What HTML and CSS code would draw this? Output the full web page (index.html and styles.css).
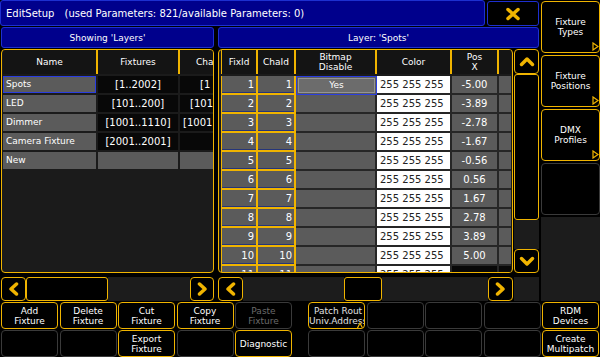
FILE: index.html
```html
<!DOCTYPE html>
<html>
<head>
  <title>EditSetup</title>
  <link rel="stylesheet" href="styles.css">
</head>
<body>
  <div class="screen">
    <div class="top">
      <div class="main">
        <div class="title-row">
          <div class="title-bar">
            <span>EditSetup</span>
            <span class="title-info">(used Parameters: 821/available Parameters: 0)</span>
          </div>
          <div class="close-button">
            <svg width="16" height="14" viewBox="0 0 16 14"><path d="M3 2.5 L13 11.5 M13 2.5 L3 11.5" stroke="#f0b400" stroke-width="3.5" stroke-linecap="round" fill="none"/></svg>
          </div>
        </div>

        <div class="header-row">
          <div class="panel-title left">Showing 'Layers'</div>
          <div class="panel-title right">Layer: 'Spots'</div>
        </div>

        <div class="content">
          <!-- Layers -->
          <div class="left-panel">
            <div class="table layers">
              <div class="lhead">
                <div>Name</div>
                <div>Fixtures</div>
                <div class="ch-head">Cha</div>
              </div>
              <div class="lrows">
                <div class="lcell name selected">Spots</div>
                <div class="lcell range">[1..2002]</div>
                <div class="lcell range ch ch-a">[1</div>

                <div class="lcell name">LED</div>
                <div class="lcell range">[101..200]</div>
                <div class="lcell range ch ch-b">[101</div>

                <div class="lcell name">Dimmer</div>
                <div class="lcell range">[1001..1110]</div>
                <div class="lcell range ch ch-c">[1001</div>

                <div class="lcell name">Camera Fixture</div>
                <div class="lcell range">[2001..2001]</div>
                <div class="lcell range"></div>

                <div class="lcell name">New</div>
                <div class="lcell grey"></div>
                <div class="lcell grey"></div>
              </div>
            </div>
            <div class="hscroll">
              <div class="arrow-btn">
                <svg width="11" height="14" viewBox="0 0 11 14"><path d="M8.5 2 L3 7 L8.5 12" stroke="#f0b400" stroke-width="3.5" stroke-linecap="round" stroke-linejoin="round" fill="none"/></svg>
              </div>
              <div class="thumb left-thumb"></div>
              <div class="track"></div>
              <div class="arrow-btn narrow">
                <svg width="11" height="14" viewBox="0 0 11 14"><path d="M2.5 2 L8 7 L2.5 12" stroke="#f0b400" stroke-width="3.5" stroke-linecap="round" stroke-linejoin="round" fill="none"/></svg>
              </div>
            </div>
          </div>

          <!-- Fixtures of the layer -->
          <div class="right-panel">
            <div class="table-area">
              <div class="table fixtures">
                <div class="fhead">
                  <div class="first">FixId</div>
                  <div>ChaId</div>
                  <div>Bitmap<br>Disable</div>
                  <div>Color</div>
                  <div>Pos<br>X</div>
                  <div class="last"></div>
                </div>

                <div class="frow">
                  <div class="fcell fix num">1</div><div class="fcell cha num">1</div>
                  <div class="fcell bitmap focused"><span class="yes">Yes</span></div>
                  <div class="fcell color num">255 255 255</div><div class="fcell pos num">-5.00</div><div class="fcell last"></div>
                </div>
                <div class="frow">
                  <div class="fcell fix num">2</div><div class="fcell cha num">2</div><div class="fcell bitmap"></div>
                  <div class="fcell color num">255 255 255</div><div class="fcell pos num">-3.89</div><div class="fcell last"></div>
                </div>
                <div class="frow">
                  <div class="fcell fix num">3</div><div class="fcell cha num">3</div><div class="fcell bitmap"></div>
                  <div class="fcell color num">255 255 255</div><div class="fcell pos num">-2.78</div><div class="fcell last"></div>
                </div>
                <div class="frow">
                  <div class="fcell fix num">4</div><div class="fcell cha num">4</div><div class="fcell bitmap"></div>
                  <div class="fcell color num">255 255 255</div><div class="fcell pos num">-1.67</div><div class="fcell last"></div>
                </div>
                <div class="frow">
                  <div class="fcell fix num">5</div><div class="fcell cha num">5</div><div class="fcell bitmap"></div>
                  <div class="fcell color num">255 255 255</div><div class="fcell pos num">-0.56</div><div class="fcell last"></div>
                </div>
                <div class="frow">
                  <div class="fcell fix num">6</div><div class="fcell cha num">6</div><div class="fcell bitmap"></div>
                  <div class="fcell color num">255 255 255</div><div class="fcell pos num">0.56</div><div class="fcell last"></div>
                </div>
                <div class="frow">
                  <div class="fcell fix num">7</div><div class="fcell cha num">7</div><div class="fcell bitmap"></div>
                  <div class="fcell color num">255 255 255</div><div class="fcell pos num">1.67</div><div class="fcell last"></div>
                </div>
                <div class="frow">
                  <div class="fcell fix num">8</div><div class="fcell cha num">8</div><div class="fcell bitmap"></div>
                  <div class="fcell color num">255 255 255</div><div class="fcell pos num">2.78</div><div class="fcell last"></div>
                </div>
                <div class="frow">
                  <div class="fcell fix num">9</div><div class="fcell cha num">9</div><div class="fcell bitmap"></div>
                  <div class="fcell color num">255 255 255</div><div class="fcell pos num">3.89</div><div class="fcell last"></div>
                </div>
                <div class="frow">
                  <div class="fcell fix num">10</div><div class="fcell cha num">10</div><div class="fcell bitmap"></div>
                  <div class="fcell color num">255 255 255</div><div class="fcell pos num">5.00</div><div class="fcell last"></div>
                </div>
                <div class="frow">
                  <div class="fcell fix num">11</div><div class="fcell cha num">11</div><div class="fcell bitmap"></div>
                  <div class="fcell color num">255 255 255</div><div class="fcell pos dark"></div><div class="fcell last dark"></div>
                </div>
              </div>

              <div class="vscroll">
                <div class="arrow-btn up">
                  <svg width="16" height="11" viewBox="0 0 16 11"><path d="M2.5 8.5 L8 3 L13.5 8.5" stroke="#f0b400" stroke-width="3.5" stroke-linecap="round" stroke-linejoin="round" fill="none"/></svg>
                </div>
                <div class="thumb vthumb"></div>
                <div class="track"></div>
                <div class="arrow-btn down">
                  <svg width="16" height="11" viewBox="0 0 16 11"><path d="M2.5 2.5 L8 8 L13.5 2.5" stroke="#f0b400" stroke-width="3.5" stroke-linecap="round" stroke-linejoin="round" fill="none"/></svg>
                </div>
              </div>
            </div>

            <div class="hscroll-row">
              <div class="hscroll wide">
                <div class="arrow-btn">
                  <svg width="11" height="14" viewBox="0 0 11 14"><path d="M8.5 2 L3 7 L8.5 12" stroke="#f0b400" stroke-width="3.5" stroke-linecap="round" stroke-linejoin="round" fill="none"/></svg>
                </div>
                <div class="track first-track"></div>
                <div class="thumb right-thumb"></div>
                <div class="track"></div>
                <div class="arrow-btn">
                  <svg width="11" height="14" viewBox="0 0 11 14"><path d="M2.5 2 L8 7 L2.5 12" stroke="#f0b400" stroke-width="3.5" stroke-linecap="round" stroke-linejoin="round" fill="none"/></svg>
                </div>
              </div>
              <div class="corner"></div>
            </div>
          </div>
        </div>
      </div>

      <div class="side">
        <div class="side-key">Fixture<br>Types<svg class="more" width="7" height="9" viewBox="0 0 7 9"><polygon points="1,1 6,4.5 1,8" fill="none" stroke="#f0b400" stroke-width="1.2"/></svg></div>
        <div class="side-key">Fixture<br>Positions<svg class="more" width="7" height="9" viewBox="0 0 7 9"><polygon points="1,1 6,4.5 1,8" fill="none" stroke="#f0b400" stroke-width="1.2"/></svg></div>
        <div class="side-key">DMX<br>Profiles<svg class="more" width="7" height="9" viewBox="0 0 7 9"><polygon points="1,1 6,4.5 1,8" fill="none" stroke="#f0b400" stroke-width="1.2"/></svg></div>
        <div class="side-key blank"></div>
        <div class="side-fill"></div>
      </div>
    </div>

    <div class="bottom">
      <div class="key-group">
        <div class="key active">Add<br>Fixture</div>
        <div class="key active">Delete<br>Fixture</div>
        <div class="key active">Cut<br>Fixture</div>
        <div class="key active">Copy<br>Fixture</div>
        <div class="key disabled">Paste<br>Fixture</div>
        <div class="key"></div>
        <div class="key"></div>
        <div class="key active">Export<br>Fixture</div>
        <div class="key"></div>
        <div class="key active">Diagnostic</div>
      </div>
      <div class="key-group">
        <div class="key active patch">Patch Rout<br>Univ.Address<svg class="notch" width="8" height="8" viewBox="0 0 8 8"><polyline points="1,8 4,2 7,8" fill="#000" stroke="#f0b400" stroke-width="1.2"/></svg></div>
        <div class="key"></div>
        <div class="key"></div>
        <div class="key"></div>
        <div class="key active">RDM<br>Devices</div>
        <div class="key"></div>
        <div class="key"></div>
        <div class="key"></div>
        <div class="key"></div>
        <div class="key active">Create<br>Multipatch</div>
      </div>
    </div>
  </div>
</body>
</html>
```

FILE: styles.css
```css
* {
  box-sizing: border-box;
}

body {
  margin: 0;
  background-color: #000000;
  font-family: "DejaVu Sans", sans-serif;
  font-size: 9px;
  color: #ffffff;
}

.screen {
  width: 600px;
  height: 357px;
  overflow: hidden;
}

.top {
  display: flex;
  gap: 2px;
  height: 301px;
}

.main {
  width: 539px;
  display: flex;
  flex-direction: column;
}

/* title */

.title-row {
  display: flex;
  gap: 2px;
  height: 26px;
}

.title-bar {
  width: 485px;
  display: flex;
  align-items: center;
  padding-left: 5px;
  font-size: 10px;
  background-color: #00008c;
  border: 1px solid #1d2fd0;
  border-radius: 3px;
  white-space: nowrap;
}

.title-info {
  margin-left: 10px;
}

.close-button {
  width: 52px;
  margin-top: 1px;
  display: flex;
  align-items: center;
  justify-content: center;
  background-color: #000000;
  border: 1px solid #1d2fd0;
  border-radius: 3px;
}

.header-row {
  display: flex;
  gap: 4px;
  height: 21px;
  margin-top: 1px;
  padding-left: 1px;
}

.panel-title {
  display: flex;
  align-items: center;
  justify-content: center;
  background-color: #00008c;
  border: 1px solid #1d2fd0;
  border-radius: 3px;
}

.panel-title.left {
  width: 213px;
}

.panel-title.right {
  width: 321px;
}

/* content */

.content {
  display: flex;
  gap: 4px;
  height: 252px;
  margin-top: 1px;
  padding-left: 1px;
}

.left-panel {
  width: 213px;
  display: flex;
  flex-direction: column;
  gap: 4px;
}

.right-panel {
  width: 321px;
  display: flex;
  flex-direction: column;
  gap: 4px;
}

.table {
  height: 224px;
  background-color: #1b1b1b;
  border: 1px solid #f0b400;
  border-radius: 4px;
  overflow: hidden;
}

.table.layers {
  padding-left: 1px;
}

.table.fixtures {
  width: 295px;
  padding-left: 2px;
}

.num {
  font-size: 10px;
}

/* layers table */

.lhead {
  display: grid;
  grid-template-columns: 93px 80px 33px;
  column-gap: 2px;
  height: 24px;
  margin-bottom: 2px;
  background-color: #f0b400;
}

.lhead div {
  display: flex;
  align-items: center;
  justify-content: center;
  background-color: #141414;
  white-space: nowrap;
  overflow: hidden;
}

.lhead div.ch-head {
  justify-content: flex-start;
  padding-left: 16px;
}

.lrows {
  display: grid;
  grid-template-columns: 93px 80px 33px;
  grid-auto-rows: 17px;
  gap: 2px;
}

.lcell {
  line-height: 17px;
  white-space: nowrap;
  overflow: hidden;
}

.lcell.name {
  padding-left: 3px;
  background-color: #5b5b5b;
}

.lcell.name.selected {
  border: 1px solid #2a3ee0;
  padding-left: 2px;
  line-height: 15px;
}

.lcell.range {
  text-align: center;
  font-size: 10px;
  background-color: #080808;
}

.lcell.ch {
  text-align: left;
}

.lcell.ch-a {
  padding-left: 20px;
}

.lcell.ch-b {
  padding-left: 10px;
}

.lcell.ch-c {
  padding-left: 3px;
}

.lcell.grey {
  background-color: #5b5b5b;
}

/* fixture table */

.table-area {
  display: flex;
  gap: 1px;
  height: 224px;
}

.fhead {
  display: grid;
  grid-template-columns: 37px 38px 81px 75px 47px 12px;
  height: 24px;
  margin-bottom: 2px;
}

.fhead div {
  display: flex;
  align-items: center;
  justify-content: center;
  text-align: center;
  line-height: 10px;
  background-color: #141414;
  border-right: 2px solid #f0b400;
}

.fhead div.first {
  border-left: 1px solid #f0b400;
}

.fhead div.last {
  border-right: none;
}

.frow {
  display: grid;
  grid-template-columns: 37px 38px 81px 75px 47px 12px;
  height: 19px;
}

.fcell {
  line-height: 17px;
  white-space: nowrap;
  overflow: hidden;
  background-color: #5b5b5b;
  border-right: 2px solid #262626;
  border-bottom: 2px solid #262626;
}

.fcell.fix,
.fcell.cha {
  text-align: right;
  padding-right: 2px;
  border-right-color: #f0b400;
  border-bottom-color: #f0b400;
  box-shadow: inset 0 -1px 0 #25357a;
}

.fcell.fix {
  border-left: 1px solid #f0b400;
}

.fcell.focused {
  border: 1px solid #2a3ee0;
  padding: 1px;
}

.yes {
  display: block;
  height: 100%;
  line-height: 13px;
  text-align: center;
  background-color: #6c6c6c;
  border: 1px solid #959595;
}

.fcell.color {
  padding-left: 3px;
  color: #222222;
  background-color: #ffffff;
}

.fcell.pos {
  text-align: center;
}

.fcell.last {
  border-right: none;
}

.fcell.dark {
  background-color: #080808;
}

/* scroll bars */

.arrow-btn {
  width: 25px;
  display: flex;
  align-items: center;
  justify-content: center;
  flex-shrink: 0;
  background-color: #000000;
  border: 1px solid #f0b400;
  border-radius: 4px;
}

.arrow-btn.narrow {
  width: 24px;
}

.thumb {
  flex-shrink: 0;
  background-color: #000000;
  border: 1px solid #f0b400;
  border-radius: 3px;
}

.track {
  flex: 1;
  background-color: #1c1c1c;
}

.hscroll {
  display: flex;
  height: 24px;
}

.left-thumb {
  width: 82px;
}

.hscroll.wide {
  width: 295px;
}

.first-track {
  flex: none;
  width: 101px;
}

.right-thumb {
  width: 38px;
}

.hscroll-row {
  display: flex;
  gap: 1px;
  height: 24px;
}

.corner {
  flex: 1;
  background-color: #1c1c1c;
}

.vscroll {
  width: 25px;
  display: flex;
  flex-direction: column;
}

.vscroll .arrow-btn {
  height: 25px;
}

.vscroll .arrow-btn.down {
  height: 24px;
}

.vthumb {
  height: 146px;
}

/* side keys */

.side {
  width: 59px;
  display: flex;
  flex-direction: column;
  gap: 2px;
  padding-top: 1px;
}

.side-key {
  position: relative;
  height: 52px;
  flex-shrink: 0;
  display: flex;
  align-items: center;
  justify-content: center;
  text-align: center;
  line-height: 10px;
  background-color: #000000;
  border: 1px solid #f0b400;
  border-radius: 4px;
}

.side-key.blank {
  border-color: #3a3a3a;
}

.side-key .more {
  position: absolute;
  right: 0;
  bottom: 1px;
}

.side-fill {
  flex: 1;
  background-color: #1c1c1c;
}

/* bottom keys */

.bottom {
  display: flex;
  gap: 16px;
  padding: 1px 1px 0 1px;
}

.key-group {
  display: grid;
  grid-template-columns: repeat(5, 57px);
  grid-template-rows: 27px 27px;
  column-gap: 1.5px;
  row-gap: 1px;
}

.key {
  position: relative;
  display: flex;
  align-items: center;
  justify-content: center;
  text-align: center;
  line-height: 10px;
  white-space: nowrap;
  overflow: hidden;
  background-color: #000000;
  border: 1px solid #3a3a3a;
  border-radius: 4px;
}

.key.active {
  border-color: #f0b400;
}

.key.disabled {
  color: #6a6a6a;
}

.key.patch {
  justify-content: flex-start;
  color: #e0e0e0;
}

.key .notch {
  position: absolute;
  right: 0;
  bottom: -1px;
}
```
